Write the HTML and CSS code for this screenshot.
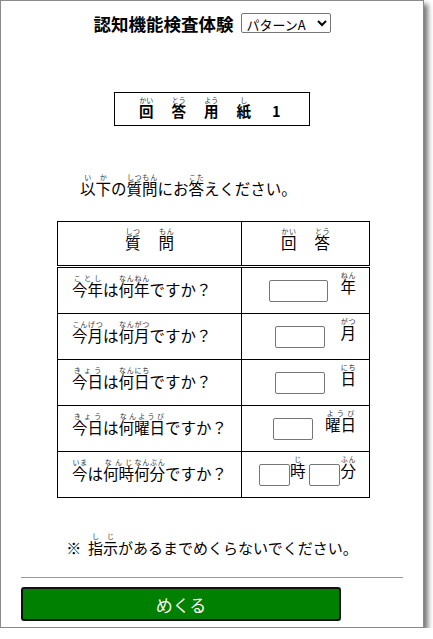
FILE: index.html
```html
<!DOCTYPE html>
<html lang="ja">
<head>
    <meta charset="UTF-8">
    <meta name="viewport" content="width=device-width, initial-scale=1.0">
    <title>認知機能検査体験</title>
    <link rel="stylesheet" href="styles.css">
</head>
<body>
    <div class="sheet">
        <header class="title-bar">
            <h1>認知機能検査体験</h1>
            <select class="pattern">
                <option>パターンA</option>
                <option>パターンB</option>
            </select>
        </header>

        <div class="paper-title">
            <ruby>回<rt>かい</rt></ruby><ruby>答<rt>とう</rt></ruby><ruby>用<rt>よう</rt></ruby><ruby>紙<rt>し</rt></ruby><span class="num">1</span>
        </div>

        <p class="lead"><ruby>以<rt>い</rt></ruby><ruby>下<rt>か</rt></ruby>の<ruby>質問<rt>しつもん</rt></ruby>にお<ruby>答<rt>こた</rt></ruby>えください。</p>

        <table class="answers">
            <thead>
                <tr>
                    <th class="q-head"><ruby>質<rt>しつ</rt></ruby><ruby>問<rt>もん</rt></ruby></th>
                    <th class="a-head"><ruby>回<rt>かい</rt></ruby><ruby>答<rt>とう</rt></ruby></th>
                </tr>
            </thead>
            <tbody>
                <tr>
                    <td class="q"><ruby>今年<rt>ことし</rt></ruby>は<ruby>何年<rt>なんねん</rt></ruby>ですか？</td>
                    <td class="a"><input type="text" class="w60"><ruby class="unit">年<rt>ねん</rt></ruby></td>
                </tr>
                <tr>
                    <td class="q"><ruby>今月<rt>こんげつ</rt></ruby>は<ruby>何月<rt>なんがつ</rt></ruby>ですか？</td>
                    <td class="a"><input type="text" class="w50"><ruby class="unit wide">月<rt>がつ</rt></ruby></td>
                </tr>
                <tr>
                    <td class="q"><ruby>今日<rt>きょう</rt></ruby>は<ruby>何日<rt>なんにち</rt></ruby>ですか？</td>
                    <td class="a"><input type="text" class="w50"><ruby class="unit wide">日<rt>にち</rt></ruby></td>
                </tr>
                <tr>
                    <td class="q"><ruby>今日<rt>きょう</rt></ruby>は<ruby>何曜日<rt>なんようび</rt></ruby>ですか？</td>
                    <td class="a"><input type="text" class="w40"><ruby class="unit">曜日<rt>ようび</rt></ruby></td>
                </tr>
                <tr>
                    <td class="q"><ruby>今<rt>いま</rt></ruby>は<ruby>何時<rt>なんじ</rt></ruby><ruby>何分<rt>なんぷん</rt></ruby>ですか？</td>
                    <td class="a"><input type="text" class="w30"><ruby class="tight">時<rt>じ</rt></ruby><input type="text" class="w30 gap"><ruby class="tight">分<rt>ふん</rt></ruby></td>
                </tr>
            </tbody>
        </table>

        <p class="note">※&nbsp;&nbsp;<ruby>指示<rt>しじ</rt></ruby>があるまでめくらないでください。</p>

        <hr class="rule">

        <button class="turn">めくる</button>
    </div>
</body>
</html>
```

FILE: styles.css
```css
body {
    margin: 0;
    padding: 0;
    background: #fff;
    font-family: "Noto Sans CJK JP", "Noto Sans", sans-serif;
    color: #000;
}
.sheet {
    box-sizing: border-box;
    width: 424px;
    height: 628px;
    padding: 7px 20px 0;
    border: 1px solid #8a8a8a;
    background: #fff;
    box-shadow: 4px 4px 5px #7a7a7a;
}
.title-bar {
    display: flex;
    justify-content: center;
    align-items: center;
    height: 30px;
}
.title-bar h1 {
    margin: 0 7px 0 0;
    font-size: 17.5px;
    font-weight: bold;
}
.pattern {
    width: 90px;
    height: 20px;
    font-family: "Noto Sans CJK JP", sans-serif;
    font-size: 13px;
    padding: 0 1px;
    border: 1px solid #767676;
    border-radius: 2px;
    background: #fff;
}
.paper-title {
    box-sizing: border-box;
    width: 196px;
    height: 34px;
    margin: 54px auto 0;
    border: 1px solid #000;
    display: flex;
    align-items: flex-end;
    padding: 0 0 7px 24px;
    font-size: 14.5px;
    font-weight: bold;
    line-height: 1;
}
.paper-title ruby {
    margin-right: 18px;
}
.paper-title rt {
    font-weight: normal;
}
.paper-title .num {
    margin-left: 3px;
}
rt {
    font-size: 7px;
    color: #333;
}
.lead {
    margin: 47px 0 0 59px;
    font-size: 15.5px;
    line-height: 24px;
}
.answers {
    width: 313px;
    margin: 21px 0 0 36px;
    border-collapse: collapse;
    font-size: 15.5px;
}
.answers th,
.answers td {
    border: 1px solid #000;
    padding: 0 0 8px;
    height: 37px;
}
.answers thead th {
    border-bottom: 3px double #000;
    font-weight: normal;
    height: 35px;
}
.answers th ruby {
    margin: 0 9px;
}
.q-head {
    width: 183px;
}
.answers td.q {
    padding-left: 14px;
}
.answers td.a {
    text-align: right;
    padding-right: 13px;
    white-space: nowrap;
}
.answers input {
    box-sizing: border-box;
    height: 22px;
    border: 1px solid #767676;
    border-radius: 2px;
    vertical-align: -3px;
    padding: 0;
}
.w60 { width: 59px; }
.w50 { width: 50px; }
.w40 { width: 40px; }
.w30 { width: 31px; }
.unit {
    margin-left: 12px;
}
.unit.wide {
    margin-left: 15px;
}
.gap {
    margin-left: 4px;
}
.note {
    margin: 34px 0 0;
    text-align: center;
    font-size: 15px;
    line-height: 24px;
}
.rule {
    margin: 17px 0 0;
    border: none;
    border-top: 1px solid #999;
}
.turn {
    display: block;
    width: 320px;
    height: 34px;
    margin-top: 9px;
    background: #008000;
    color: #fff;
    border: 2px solid #111;
    border-radius: 3px;
    font-family: "Noto Sans CJK JP", sans-serif;
    font-size: 17px;
    cursor: pointer;
}
```
